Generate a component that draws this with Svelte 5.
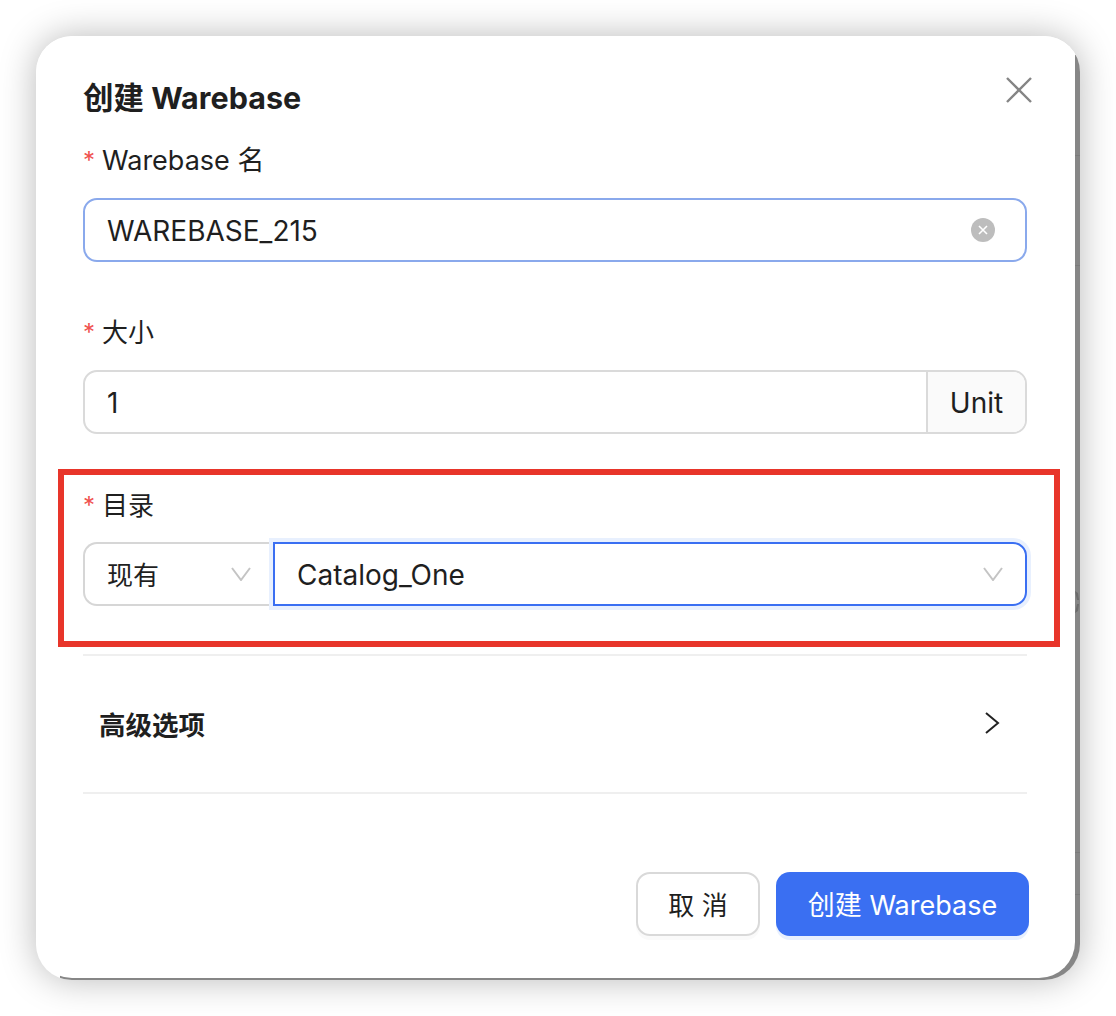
<script>
    let name = "WAREBASE_215";
    let size = "1";
</script>

<div class="page">
    <div class="backdrop">
        <div class="modal">
            <div class="head">
                <h2>创建 Warebase</h2>
                <svg class="close" viewBox="0 0 26 26" width="26" height="26">
                    <path d="M1 1L25 25M25 1L1 25" stroke="#858585" stroke-width="2.4" fill="none" />
                </svg>
            </div>

            <div class="field first">
                <div class="label"><span class="star">*</span>Warebase 名</div>
                <div class="input focused">
                    <span class="value">{name}</span>
                    <svg class="clear" viewBox="0 0 24 24" width="24" height="24">
                        <circle cx="12" cy="12" r="12" fill="#bdbdbd" />
                        <path d="M8 8L16 16M16 8L8 16" stroke="#fff" stroke-width="1.6" fill="none" />
                    </svg>
                </div>
            </div>

            <div class="field second">
                <div class="label cjk"><span class="star">*</span>大小</div>
                <div class="input addon-row">
                    <span class="value">{size}</span>
                    <span class="addon">Unit</span>
                </div>
            </div>

            <div class="field third">
                <div class="label cjk"><span class="star">*</span>目录</div>
                <div class="compound">
                    <div class="select left">
                        <span class="mode">现有</span>
                        <svg class="chev" viewBox="0 0 20 14" width="20" height="14">
                            <path d="M1 1L10 13L19 1" stroke="#c4c4c4" stroke-width="2" fill="none" />
                        </svg>
                    </div>
                    <div class="select right">
                        <span>Catalog_One</span>
                        <svg class="chev" viewBox="0 0 20 14" width="20" height="14">
                            <path d="M1 1L10 13L19 1" stroke="#c4c4c4" stroke-width="2" fill="none" />
                        </svg>
                    </div>
                </div>
            </div>

            <div class="advanced">
                <span>高级选项</span>
                <svg viewBox="0 0 16 24" width="16" height="24">
                    <path d="M2 2L14 12L2 22" stroke="#222" stroke-width="2" fill="none" />
                </svg>
            </div>

            <div class="footer">
                <button class="btn cancel">取 消</button>
                <button class="btn primary">创建 Warebase</button>
            </div>
        </div>
    </div>

    <!-- bit of the page behind the dialog, shows in the gap on the right -->
    <svg class="peek" viewBox="0 0 5 24" width="5" height="24">
        <path d="M0 1L3 3L4 10L2 10ZM0 23L3 21L4 14L2 14Z" fill="#6c6c6c" />
    </svg>

    <!-- annotation on top of the screenshot -->
    <div class="highlight"></div>
</div>

<style>
    :global(body) {
        background: #fff;
        overflow: hidden;
    }
    .page {
        position: relative;
        width: 1116px;
        height: 1016px;
        padding: 36px;
        box-sizing: border-box;
        font-family: Inter, "Noto Sans CJK SC", sans-serif;
        color: #1f1f1f;
    }
    .backdrop {
        width: 1044px;
        height: 944px;
        border-radius: 36px;
        overflow: hidden;
        background:
            linear-gradient(#fff 19px, transparent 19px),
            linear-gradient(90deg, #fff 24px, transparent 24px),
            linear-gradient(#7b7b7b, #7b7b7b) 0 119px / 100% 1px no-repeat,
            linear-gradient(#7b7b7b, #7b7b7b) 0 229px / 100% 1px no-repeat,
            linear-gradient(#7b7b7b, #7b7b7b) 0 816px / 100% 1px no-repeat,
            linear-gradient(#7b7b7b, #7b7b7b) 0 858px / 100% 1px no-repeat,
            #868686;
    }
    .page::before {
        content: "";
        position: absolute;
        left: 36px;
        top: 36px;
        width: 1044px;
        height: 944px;
        border-radius: 36px;
        box-shadow: 0 0 36px rgba(0, 0, 0, 0.28);
    }
    .modal {
        width: 1039px;
        height: 942px;
        box-sizing: border-box;
        padding: 0 48px 0 47px;
        background: #fff;
        border-radius: 36px 0 36px 36px;
        position: relative;
    }
    .head {
        display: flex;
        justify-content: space-between;
        height: 90px;
        padding-top: 41px;
        box-sizing: border-box;
    }
    h2 {
        margin: 0;
        font-size: 30.5px;
        line-height: 42px;
        font-weight: 700;
        white-space: nowrap;
    }
    .close {
        margin: 0 -5px 0 0;
    }
    .label {
        font-size: 27px;
        height: 36px;
        line-height: 36px;
        display: flex;
    }
    .label.cjk {
        font-size: 26px;
    }
    .star {
        color: #f0524f;
        width: 19px;
        font-size: 24px;
    }
    .first {
        padding-top: 17px;
    }
    .second {
        padding-top: 53px;
    }
    .third {
        padding-top: 54px;
    }
    .input {
        margin-top: 19px;
        height: 64px;
        box-sizing: border-box;
        display: flex;
        align-items: center;
        border: 2px solid #dadada;
        border-radius: 14px;
        font-size: 28px;
    }
    .value {
        padding-top: 2px;
    }
    .input.focused {
        border-color: #8aa9ec;
        padding: 0 30px 0 22px;
        justify-content: space-between;
    }
    .addon-row {
        padding-left: 22px;
        justify-content: space-between;
        overflow: hidden;
    }
    .addon {
        height: 100%;
        width: 99px;
        display: flex;
        align-items: center;
        justify-content: center;
        background: #fafafa;
        border-left: 2px solid #dadada;
        box-sizing: border-box;
        padding-top: 2px;
    }
    .compound {
        margin-top: 18px;
        display: flex;
        height: 64px;
        font-size: 28px;
    }
    .select {
        box-sizing: border-box;
        display: flex;
        align-items: center;
        justify-content: space-between;
    }
    .mode {
        font-size: 26px;
        padding-bottom: 1px;
    }
    .left {
        width: 190px;
        padding: 0 22px 0 22px;
        border: 2px solid #d6d6d6;
        border-right: 0;
        border-radius: 14px 0 0 14px;
    }
    .right {
        flex: 1;
        padding: 0 22px 0 22px;
        border: 2px solid #3a6ff2;
        border-radius: 0 14px 14px 0;
        box-shadow: 0 0 0 4px #e8f0fe;
    }
    .right span {
        padding-top: 2px;
    }
    .advanced {
        margin-top: 48px;
        height: 140px;
        box-sizing: border-box;
        border-top: 2px solid #efefef;
        border-bottom: 2px solid #efefef;
        display: flex;
        align-items: center;
        justify-content: space-between;
        padding: 0 27px 2px 16px;
        font-size: 26.5px;
        font-weight: 700;
    }
    .footer {
        margin-top: 78px;
        margin-right: -2px;
        display: flex;
        justify-content: flex-end;
        gap: 16px;
    }
    .btn {
        height: 64px;
        box-sizing: border-box;
        border-radius: 14px;
        font-family: inherit;
        font-size: 27px;
        padding: 0 0 2px;
    }
    .cancel {
        width: 124px;
        background: #fff;
        border: 2px solid #d9d9d9;
        color: #1f1f1f;
        box-shadow: 0 4px 0 #fafafa;
        font-size: 26px;
    }
    .primary {
        width: 253px;
        background: #3a6ff2;
        border: 0;
        color: #fff;
        box-shadow: 0 4px 0 #e8f0fe;
    }
    .peek {
        position: absolute;
        left: 1075px;
        top: 590px;
    }
    .highlight {
        position: absolute;
        left: 58px;
        top: 469px;
        width: 1002px;
        height: 178px;
        box-sizing: border-box;
        border: 6px solid #e8352a;
    }
</style>
